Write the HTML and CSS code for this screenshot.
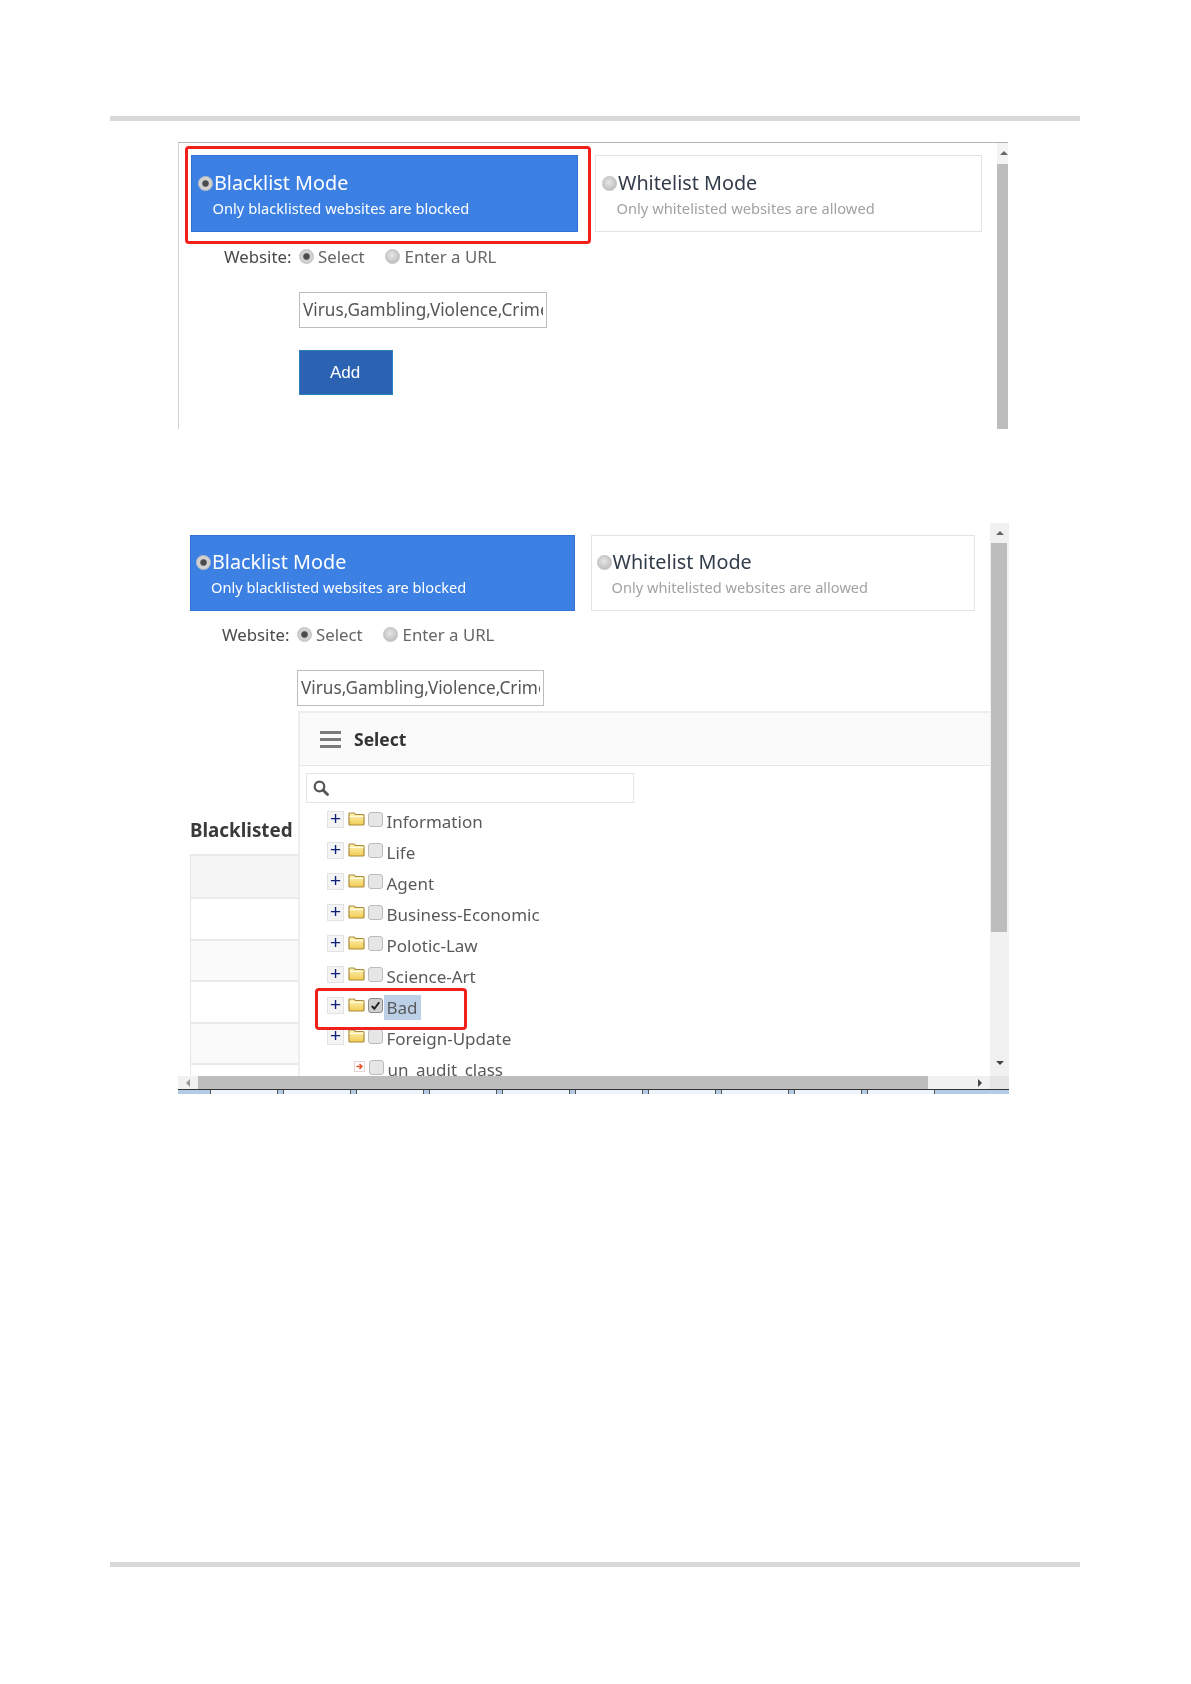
FILE: index.html
```html
<!DOCTYPE html>
<html lang="en">
<head>
<meta charset="utf-8">
<title>Blacklist Mode</title>
<link rel="stylesheet" href="styles.css">
</head>
<body>
<svg class="defs" width="0" height="0" aria-hidden="true">
  <defs>
    <linearGradient id="fold" x1="0" y1="0" x2="0" y2="1">
      <stop offset="0" stop-color="#fff5bd"/>
      <stop offset="1" stop-color="#f2cb50"/>
    </linearGradient>
    <symbol id="folder" viewBox="0 0 17 14">
      <path d="M1 3V2q0-1 1-1h4l1.500 1.500H15q1 0 1 1V12q0 1-1 1H2q-1 0-1-1Z" fill="url(#fold)" stroke="#a88a3c" stroke-width="1.200"/>
      <path d="M1.500 4.500H15.500" stroke="#fffbe0" stroke-width="1" fill="none"/>
    </symbol>
  </defs>
</svg>
<main class="page">
  <div class="rule"></div>

  <section class="shot shot-one">
    <div class="shot-body">
      <div class="annot annot-mode"></div>
      <div class="modes">
        <div class="mode mode-on">
          <div class="mode-title"><span class="radio radio-on"></span>Blacklist Mode</div>
          <div class="mode-sub">Only blacklisted websites are blocked</div>
        </div>
        <div class="mode">
          <div class="mode-title"><span class="radio"></span>Whitelist Mode</div>
          <div class="mode-sub">Only whitelisted websites are allowed</div>
        </div>
      </div>
      <div class="website">
        <span class="web-label">Website:</span>
        <span class="radio radio-on"></span><span class="web-opt">Select</span>
        <span class="radio radio-second"></span><span class="web-opt">Enter a URL</span>
      </div>
      <input class="site-input" type="text" value="Virus,Gambling,Violence,Crime,Bad" readonly>
      <button class="add" type="button">Add</button>
    </div>
    <div class="vbar-one">
      <div class="vbar-cap"><span class="arrow-up"></span></div>
      <div class="vbar-thumb"></div>
    </div>
  </section>

  <section class="shot-two">
    <div class="two-main">
      <div class="two-content">
        <div class="annot annot-bad"></div>
        <div class="modes modes-two">
          <div class="mode mode-on">
            <div class="mode-title"><span class="radio radio-on"></span>Blacklist Mode</div>
            <div class="mode-sub">Only blacklisted websites are blocked</div>
          </div>
          <div class="mode">
            <div class="mode-title"><span class="radio"></span>Whitelist Mode</div>
            <div class="mode-sub">Only whitelisted websites are allowed</div>
          </div>
        </div>
        <div class="website website-two">
          <span class="web-label">Website:</span>
          <span class="radio radio-on"></span><span class="web-opt">Select</span>
          <span class="radio radio-second"></span><span class="web-opt">Enter a URL</span>
        </div>
        <input class="site-input site-input-two" type="text" value="Virus,Gambling,Violence,Crime,Bad" readonly>
        <div class="lower">
          <div class="listed">
            <h2 class="listed-title">Blacklisted</h2>
            <div class="listed-table">
              <div class="lt-row lt-head"></div>
              <div class="lt-row"></div>
              <div class="lt-row lt-alt"></div>
              <div class="lt-row"></div>
              <div class="lt-row lt-alt"></div>
              <div class="lt-row"></div>
            </div>
          </div>
          <div class="picker">
            <div class="picker-head">
              <span class="burger"><i></i><i></i><i></i></span>
              <span class="picker-title">Select</span>
            </div>
            <div class="search">
              <svg class="search-icon" viewBox="0 0 16 16"><circle cx="6.500" cy="6.500" r="4.800" fill="none" stroke="#555" stroke-width="2.200"/><path d="M10 10l4.500 4.500" stroke="#555" stroke-width="2.800" stroke-linecap="round"/></svg>
            </div>
            <ul class="tree">
              <li class="node"><span class="plus">+</span><svg class="folder"><use href="#folder"/></svg><span class="check"></span><span class="label">Information</span></li>
              <li class="node"><span class="plus">+</span><svg class="folder"><use href="#folder"/></svg><span class="check"></span><span class="label">Life</span></li>
              <li class="node"><span class="plus">+</span><svg class="folder"><use href="#folder"/></svg><span class="check"></span><span class="label">Agent</span></li>
              <li class="node"><span class="plus">+</span><svg class="folder"><use href="#folder"/></svg><span class="check"></span><span class="label">Business-Economic</span></li>
              <li class="node"><span class="plus">+</span><svg class="folder"><use href="#folder"/></svg><span class="check"></span><span class="label">Polotic-Law</span></li>
              <li class="node"><span class="plus">+</span><svg class="folder"><use href="#folder"/></svg><span class="check"></span><span class="label">Science-Art</span></li>
              <li class="node"><span class="plus">+</span><svg class="folder"><use href="#folder"/></svg><span class="check check-on"><svg viewBox="0 0 14 14"><path d="M3 7.500l2.800 3L11 3.500" fill="none" stroke="#222" stroke-width="2.200"/></svg></span><span class="label label-on">Bad</span></li>
              <li class="node"><span class="plus">+</span><svg class="folder"><use href="#folder"/></svg><span class="check"></span><span class="label">Foreign-Update</span></li>
              <li class="node node-leaf"><svg class="leaf" viewBox="0 0 11 11"><rect x=".5" y=".5" width="10" height="10" fill="#fff" stroke="#e3d5d5"/><path d="M2.500 5.500H7M5.500 3l2.500 2.500L5.500 8" fill="none" stroke="#e8502a" stroke-width="1.400"/></svg><span class="check"></span><span class="label">un_audit_class</span></li>
            </ul>
          </div>
        </div>
      </div>
      <div class="vbar-two">
        <div class="vbar-end"><span class="arrow-up"></span></div>
        <div class="vbar-two-thumb"></div>
        <div class="vbar-fill"></div>
        <div class="vbar-end vbar-end-low"><span class="arrow-down"></span></div>
      </div>
    </div>
    <div class="hbar">
      <div class="hbar-end"><span class="arrow-left"></span></div>
      <div class="hbar-thumb"></div>
      <div class="hbar-fill"></div>
      <div class="hbar-right"><span class="arrow-right"></span></div>
      <div class="hbar-corner"></div>
    </div>
    <div class="tabs">
      <span class="tab"></span><span class="tab"></span><span class="tab"></span><span class="tab"></span><span class="tab"></span>
      <span class="tab"></span><span class="tab"></span><span class="tab"></span><span class="tab"></span><span class="tab"></span>
    </div>
  </section>

  <div class="rule rule-bottom"></div>
</main>
</body>
</html>
```
FILE: styles.css
```css
* { box-sizing: border-box; }
html, body { margin: 0; padding: 0; background: #fff; }
body { font-family: "Noto Sans", "Open Sans", sans-serif; color: #444; }
.defs { position: absolute; }
.page { width: 970px; margin-left: 110px; padding-top: 116px; height: 1684px; }
.rule { height: 5px; background: #d9d9d9; }
.rule-bottom { margin-top: 468px; }

.shot { margin: 21px 0 0 68px; width: 830px; height: 287px; display: flex; border-top: 1px solid #b4b4b4; filter: blur(.35px); }
.shot-body { position: relative; flex: 1; border-left: 1px solid #d4d4d4; padding: 12px 0 0 12px; }
.annot { position: absolute; border: 3px solid #f2201c; border-radius: 4px; pointer-events: none; }
.annot-mode { left: 6px; top: 3px; width: 406px; height: 98px; }
.annot-bad { left: 137px; top: 465px; width: 152px; height: 42px; }

.modes { display: flex; gap: 17px; }
.mode { width: 387px; height: 77px; border: 1px solid #e4e4e4; padding: 14px 0 0 6px; background: #fff; }
.mode-on { background: #3c80e4; border-color: #3272d4; color: #fff; }
.mode-title { display: flex; align-items: center; font-size: 19.800px; line-height: 26px; color: #333c4a; }
.mode-on .mode-title { color: #fff; }
.mode-sub { margin: 0 0 0 14.500px; font-size: 14.700px; line-height: 24px; color: #a2a2a2; white-space: nowrap; }
.mode-on .mode-sub { color: #fff; }

.radio { flex: none; display: inline-block; width: 15px; height: 15px; border-radius: 50%; background: radial-gradient(circle at 45% 40%, #e6e6e6, #bdbdbd 80%); border: 1px solid #c2c2c2; }
.radio-on { background: radial-gradient(circle, #4c4c4c 0, #4c4c4c 30%, #d4d4d4 42%, #c8c8c8 100%); }
.mode-title .radio { margin-right: 1px; }
.website { display: flex; align-items: center; height: 24px; margin: 12px 0 0 33px; font-size: 16.800px; }
.web-label { width: 75px; color: #4a4a4a; }
.web-opt { margin-left: 4px; color: #666; }
.radio-second { margin-left: 20px; }
.radio-second + .web-opt { margin-left: 5px; }

.site-input { display: block; width: 248px; height: 36px; margin: 24px 0 0 108px; padding: 0 3px 1px; border: 1px solid #bdbdbd; background: #fff; font: 17.200px "Noto Sans", sans-serif; color: #555; border-radius: 0; outline: none; }
.add { display: block; width: 94px; height: 45px; margin: 22px 0 0 108px; padding: 0 2px 0 0; border: 1px solid #2b80c0; background: #2b62b2; color: #fff; font: 17px "Liberation Sans", sans-serif; }

.vbar-one { width: 11px; background: #f4f4f4; display: flex; flex-direction: column; overflow: hidden; }
.vbar-cap { height: 21px; position: relative; }
.vbar-thumb { flex: 1; background: #bdbdbd; }
.arrow-up, .arrow-down, .arrow-left, .arrow-right { width: 0; height: 0; display: block; border-style: solid; border-color: transparent; }
.arrow-up { border-width: 0 4px 4px; border-bottom-color: #666; }
.arrow-down { border-width: 4px 4px 0; border-top-color: #444; }
.arrow-left { border-width: 4px 4px 4px 0; border-right-color: #999; }
.arrow-right { border-width: 4px 0 4px 4px; border-left-color: #444; }
.vbar-cap .arrow-up { position: absolute; left: 3px; top: 8px; }

.shot-two { margin: 94px 0 0 68px; width: 831px; height: 571px; display: flex; flex-direction: column; filter: blur(.35px); }
.two-main { flex: 1; min-height: 0; display: flex; overflow: hidden; }
.two-content { position: relative; flex: 1; min-width: 0; padding: 12px 0 0 12px; }
.modes-two { gap: 16px; }
.modes-two .mode { width: 384.500px; height: 76px; padding: 13px 0 0 5px; }
.modes-two .mode-sub { margin-left: 15px; font-size: 14.600px; }
.website-two { margin: 11px 0 0 32px; }
.site-input-two { width: 247px; height: 36px; margin: 24px 0 0 107px; }

.lower { display: flex; margin-top: 5px; height: 400px; }
.listed { width: 109px; padding-top: 106px; flex: none; }
.listed-title { margin: 0 0 11px; font-size: 18.800px; line-height: 26px; font-weight: 700; color: #3a3a3a; white-space: nowrap; }
.listed-table { border-left: 1px solid #e6e6e6; }
.lt-row { height: 41.500px; border-bottom: 2px solid #eaeaea; }
.lt-head { height: 45px; background: #f5f5f5; border-top: 2px solid #eaeaea; }
.lt-alt { background: #fafafa; }

.picker { flex: 1; min-width: 0; background: #fff; border-left: 2px solid #eee; border-top: 2px solid #eee; margin-left: -1px; }
.picker-head { height: 53px; display: flex; align-items: center; padding: 0 0 0 20px; background: #fafafa; border-bottom: 1px solid #e6e6e6; }
.burger { display: flex; flex-direction: column; justify-content: space-between; width: 21px; height: 17px; margin-right: 13px; }
.burger i { display: block; height: 3px; background: #7b7b7b; }
.picker-title { font-size: 17.500px; font-weight: 700; color: #333; }
.search { width: 328px; height: 30px; margin: 7px 0 0 6px; border: 1px solid #e4e4e4; padding: 6px 0 0 6px; background: #fff; }
.search-icon { display: block; width: 16px; height: 16px; }
.tree { list-style: none; margin: 3px 0 0; padding: 0 0 0 27px; }
.node { height: 31px; display: flex; align-items: center; }
.plus { flex: none; width: 17px; height: 17px; margin-top: -5px; padding-bottom: 1px; display: flex; align-items: center; justify-content: center; background: #f4f4f4; border: 1px solid #e2e2e2; color: #10207a; font: 400 19px/1 "Liberation Sans", sans-serif; }
.folder { flex: none; width: 17px; height: 14px; margin: -6px 0 0 4px; }
.check { flex: none; width: 15px; height: 15px; margin: -4px 0 0 3px; border-radius: 3px; border: 1px solid #bcbcbc; background: #e6e6e6; display: block; }
.check svg { display: block; width: 13px; height: 13px; }
.check-on { background: #cfcfcf; border-color: #8e8e8e; }
.label { margin-left: .5px; padding: 0 3px; font-size: 17px; line-height: 25px; color: #5a5a5a; white-space: nowrap; }
.label-on { background: #bcd0e8; }
.node-leaf { padding-left: 27px; }
.leaf { flex: none; width: 11px; height: 11px; margin-top: -6px; }
.node-leaf .check { margin-left: 4px; }

.vbar-two { width: 19px; flex: none; background: #f1f1f1; display: flex; flex-direction: column; }
.vbar-end { height: 20px; display: flex; align-items: center; justify-content: center; }
.vbar-end-low { height: 26px; }
.vbar-two-thumb { height: 389px; width: 16px; margin-left: 1px; background: #bdbdbd; }
.vbar-fill { flex: 1; }

.hbar { flex: none; height: 13px; display: flex; background: #f1f1f1; }
.hbar-end { width: 20px; display: flex; align-items: center; justify-content: center; }
.hbar-thumb { width: 730px; background: #bdbdbd; }
.hbar-fill { flex: 1; }
.hbar-right { width: 20px; display: flex; align-items: center; justify-content: flex-end; padding-right: 8px; }
.hbar-corner { width: 19px; background: #e6e6e6; }
.tabs { flex: none; height: 5px; display: flex; gap: 5px; padding-left: 32px; background: #b4cbe6; border-top: 1px solid #333; }
.tab { width: 68px; background: #eef4fb; border-left: 1px solid #555; border-right: 1px solid #555; }
```
